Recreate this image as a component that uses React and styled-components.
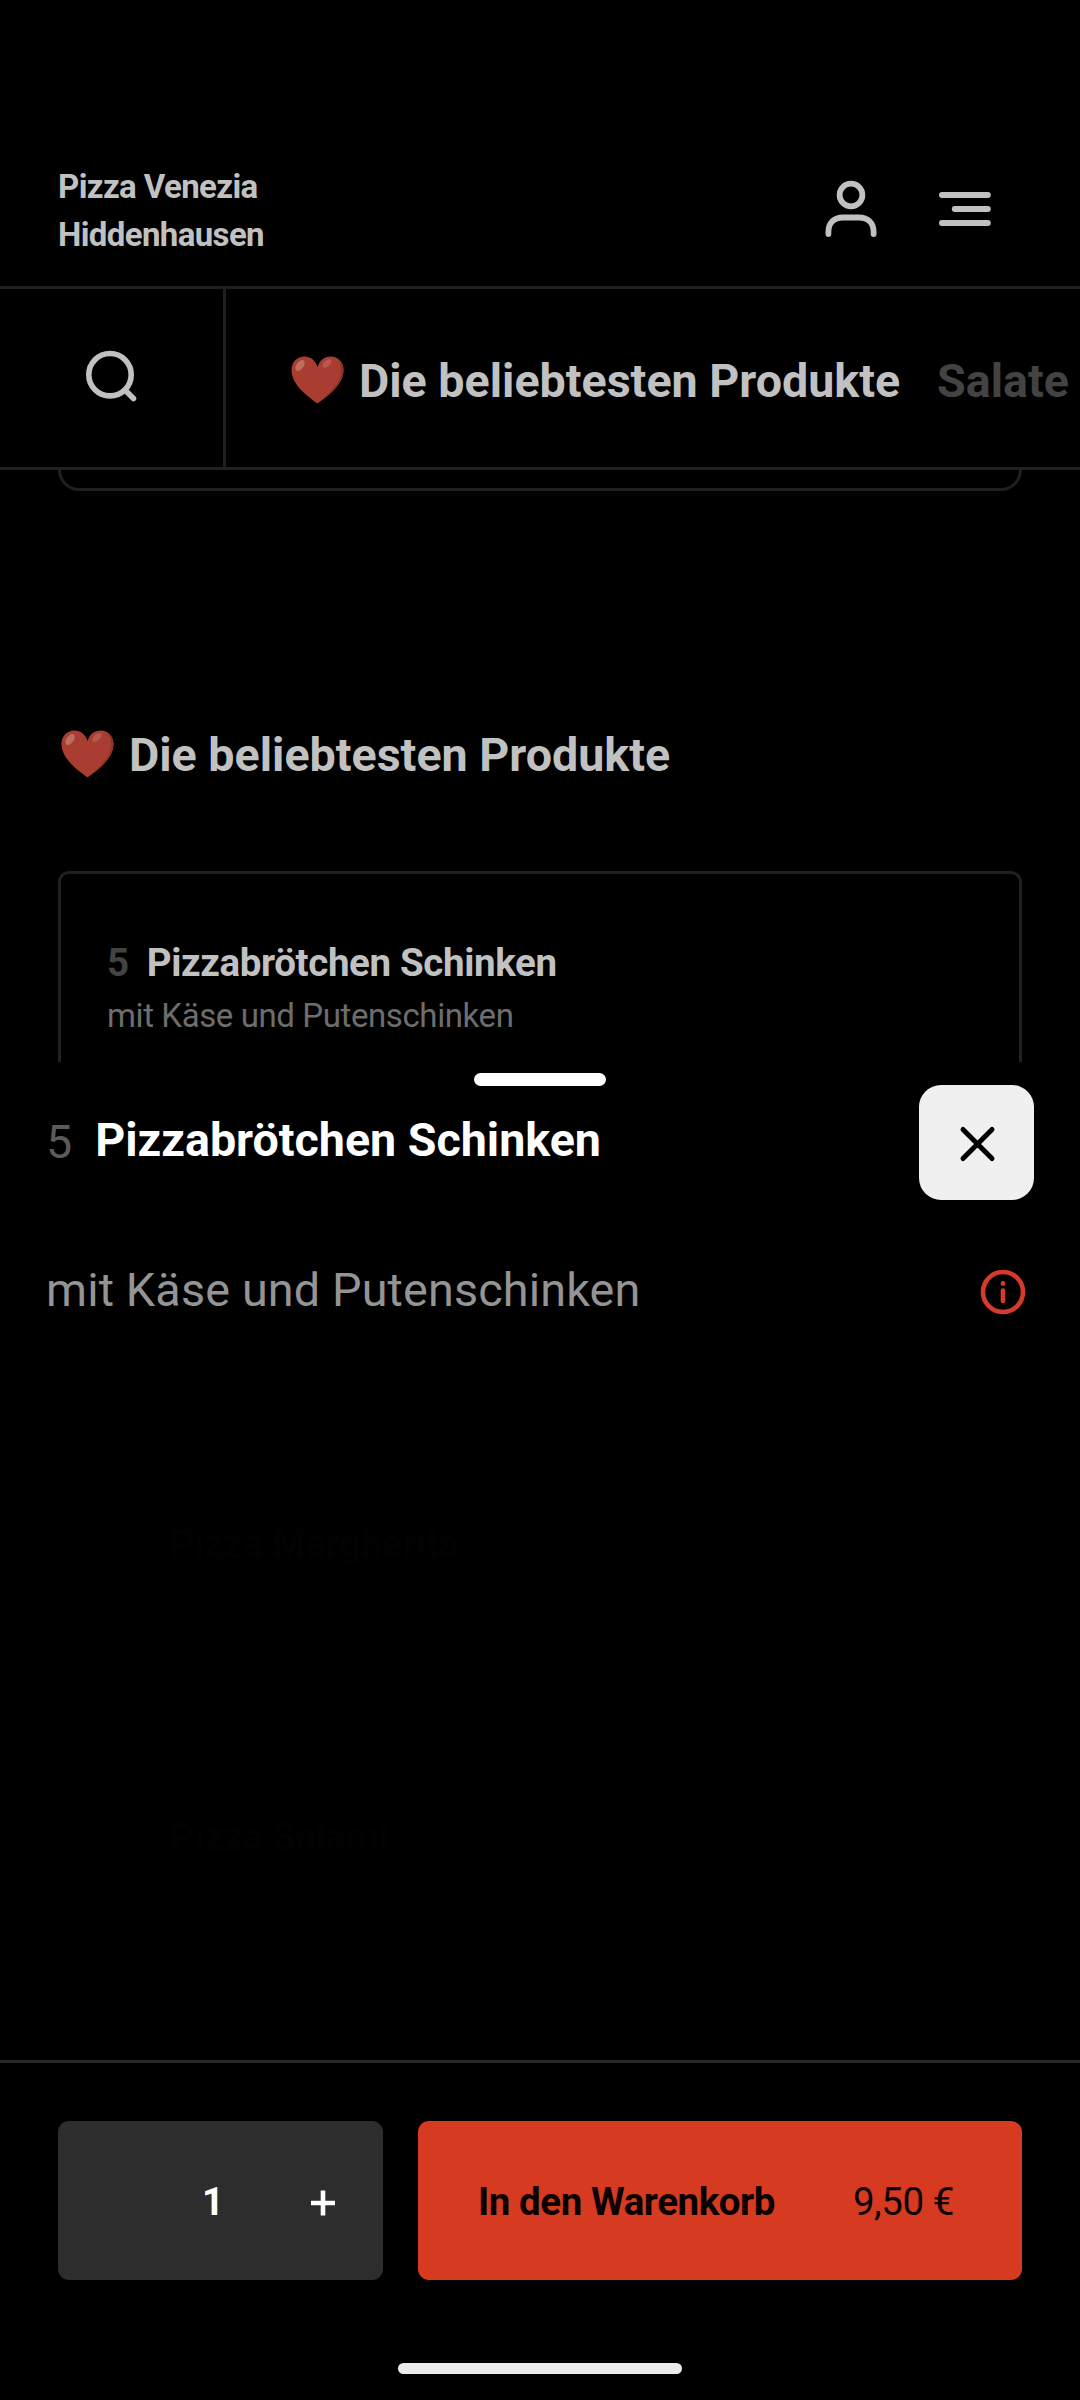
import React from "react";
import styled, { createGlobalStyle } from "styled-components";

const GlobalStyle = createGlobalStyle`
  *, *::before, *::after { box-sizing: border-box; }
  html, body { margin: 0; padding: 0; background: #000; }
  body { font-family: Roboto, "Liberation Sans", sans-serif; overflow: hidden; }
  button { font: inherit; border: 0; padding: 0; background: none; }
  h1, h2, h3, p { margin: 0; font-weight: 400; }
  svg { display: block; flex: none; }
`;

const Screen = styled.div`
  width: 1080px;
  height: 2400px;
  display: flex;
  flex-direction: column;
  background: #000;
  overflow: hidden;
`;

const Backdrop = styled.div`
  height: 1062px;
  flex: none;
  display: flex;
  flex-direction: column;
  overflow: hidden;
  color: #c1c1c1;
`;

const Header = styled.header`
  height: 289px;
  flex: none;
  display: flex;
  justify-content: space-between;
  padding: 163px 86px 0 58px;
  border-bottom: 3px solid #202020;
`;

const Brand = styled.h1`
  width: 260px;
  font-size: 33px;
  line-height: 48px;
  font-weight: 700;
  letter-spacing: -0.62px;
`;

const HeaderActions = styled.div`
  display: flex;
  height: 90px;
  gap: 54px;
`;

const IconButton = styled.button`
  width: 60px;
  height: 90px;
  color: inherit;
  display: flex;
  align-items: center;
  justify-content: center;
`;

const CategoryBar = styled.nav`
  height: 181px;
  flex: none;
  display: flex;
  border-bottom: 3px solid #202020;
`;

const SearchButton = styled.button`
  width: 226px;
  flex: none;
  display: flex;
  padding: 58px 0 0 82px;
  color: inherit;
  border-right: 3px solid #202020;
`;

const Tabs = styled.div`
  display: flex;
  flex: 1;
  padding: 57px 0 0 62px;
  overflow: hidden;
  white-space: nowrap;
`;

const Tab = styled.span`
  display: flex;
  align-items: center;
  height: 70px;
  margin-right: 37px;
  font-size: 46.6px;
  line-height: 70px;
  font-weight: 700;
  color: ${(p) => (p.$active ? "#c1c1c1" : "#434343")};
`;

const HeartSvg = styled.svg`
  margin: -2px 15px 0 3px;
`;

const Content = styled.main`
  flex: 1;
  display: flex;
  flex-direction: column;
  padding: 0 58px;
  overflow: hidden;
`;

const PreviousCard = styled.div`
  height: 21px;
  flex: none;
  border: 3px solid #202020;
  border-top: 0;
  border-radius: 0 0 22px 22px;
`;

const SectionTitle = styled.h2`
  display: flex;
  align-items: center;
  height: 70px;
  margin-top: 229px;
  font-size: 46.6px;
  line-height: 70px;
  font-weight: 700;
`;

const ProductCard = styled.article`
  flex: none;
  height: 260px;
  margin-top: 81px;
  padding: 65px 46px 0;
  border: 3px solid #202020;
  border-radius: 11px;
`;

const ProductName = styled.h3`
  display: flex;
  gap: 18px;
  font-size: 38.5px;
  line-height: 48px;
  font-weight: 700;
  letter-spacing: -0.36px;
`;

const ProductNumber = styled.span`
  color: #434343;
`;

const ProductText = styled.p`
  margin-top: 8px;
  font-size: 33px;
  line-height: 42px;
  letter-spacing: -0.4px;
  color: #6d6d6d;
`;

const Sheet = styled.section`
  flex: 1;
  display: flex;
  flex-direction: column;
  background: #000;
`;

const Grip = styled.div`
  width: 132px;
  height: 13px;
  flex: none;
  margin: 11px auto 0;
  border-radius: 7px;
  background: #fff;
`;

const SheetHead = styled.div`
  height: 114px;
  flex: none;
  display: flex;
  justify-content: space-between;
  margin-top: -1px;
  padding: 0 46px;
`;

const SheetTitle = styled.h2`
  display: flex;
  height: 70px;
  margin-top: 20px;
  gap: 23px;
  font-size: 46.6px;
  line-height: 70px;
  font-weight: 700;
  color: #fff;
`;

const SheetNumber = styled.span`
  padding-top: 2px;
  font-weight: 400;
  color: #5b5b5b;
`;

const CloseButton = styled.button`
  width: 115px;
  height: 115px;
  border-radius: 22px;
  background: #f0f0f0;
  display: flex;
  align-items: center;
  justify-content: center;
`;

const SheetInfo = styled.div`
  display: flex;
  flex: none;
  justify-content: space-between;
  align-items: center;
  height: 70px;
  margin-top: 56px;
  padding: 0 52px 0 46px;
`;

const SheetText = styled.p`
  font-size: 46.75px;
  line-height: 70px;
  letter-spacing: 0.15px;
  color: #949494;
`;

const InfoSvg = styled.svg`
  margin-top: 3px;
`;

const FadedList = styled.div`
  display: flex;
  flex-direction: column;
  gap: 245px;
  margin-top: 195px;
  padding-left: 170px;
  font-size: 38.5px;
  line-height: 48px;
  font-weight: 700;
  letter-spacing: -0.36px;
  color: #020202;
`;

const Footer = styled.footer`
  height: 340px;
  flex: none;
  display: flex;
  flex-direction: column;
  align-items: center;
  margin-top: auto;
  padding: 58px 58px 0;
  border-top: 3px solid #272727;
`;

const FooterActions = styled.div`
  width: 100%;
  display: flex;
  gap: 35px;
`;

const Quantity = styled.div`
  width: 325px;
  height: 159px;
  display: grid;
  grid-template-columns: 100px 108px 114px;
  align-items: center;
  justify-items: center;
  border-radius: 11px;
  background: #2d2d2d;
  color: #fff;
  font-size: 38.5px;
  font-weight: 700;
`;

const Amount = styled.span`
  grid-column: 2;
  line-height: 46px;
  padding: 3px 0 0 2px;
`;

const PlusButton = styled.button`
  width: 80px;
  height: 100px;
  padding-top: 4px;
  display: flex;
  align-items: center;
  justify-content: center;
  color: inherit;
`;

const CartButton = styled.button`
  flex: 1;
  height: 159px;
  display: flex;
  align-items: center;
  justify-content: space-between;
  padding: 3px 68px 0 60px;
  border-radius: 11px;
  background: #d63a21;
  color: #0a0100;
  font-size: 38.5px;
  line-height: 46px;
  letter-spacing: -0.43px;
`;

const CartLabel = styled.span`
  font-weight: 700;
`;

const HomeIndicator = styled.div`
  width: 284px;
  height: 11px;
  margin-top: 83px;
  border-radius: 6px;
  background: #ebebeb;
`;

function Heart() {
  return (
    <HeartSvg width="53" height="48" viewBox="0 0 53 48">
      <path d="M26.5 47.5C19.500 42 .5 30 .5 14C.5 6 6 .5 13.500 .5C19.500 .5 24.500 4.500 26.500 11C28.500 4.500 33.500 .5 39.500 .5C47 .5 52.500 6 52.500 14C52.500 30 33.500 42 26.500 47.500Z" fill="#a93d31" />
      <path d="M45 1.800C49.500 4 52.500 8.500 52.500 14C52.500 28 38 39 30 44.800C38 37 50 27 50 14C50 8.500 48 4.500 45 1.800Z" fill="#913229" />
      <ellipse cx="9" cy="9.500" rx="3.600" ry="6.300" transform="rotate(36 9 9.500)" fill="#ba6f61" />
      <ellipse cx="36" cy="7.500" rx="3" ry="5.500" transform="rotate(48 36 7.500)" fill="#b55a4c" />
    </HeartSvg>
  );
}

function UserIcon() {
  return (
    <svg width="60" height="66" viewBox="0 0 60 66" fill="none" stroke="currentColor" strokeWidth="5.8" strokeLinecap="round">
      <circle cx="31" cy="20" r="11.400" />
      <path d="M8.400 59V57C8.400 48 14 42.500 23 42.500H39C48 42.500 53.600 48 53.600 57V59" />
    </svg>
  );
}

function MenuIcon() {
  return (
    <svg width="60" height="66" viewBox="0 0 60 66" fill="none" stroke="currentColor" strokeWidth="6" strokeLinecap="round">
      <path d="M8 20H53.800M20.800 34H53.800M8 48H53.800" />
    </svg>
  );
}

function SearchIcon() {
  return (
    <svg width="60" height="60" viewBox="0 0 60 60" fill="none" stroke="currentColor" strokeWidth="5.6" strokeLinecap="round">
      <circle cx="28" cy="27.700" r="21.200" />
      <path d="M43 43L51.500 51.500" />
    </svg>
  );
}

export default function App() {
  return (
    <>
      <GlobalStyle />
      <Screen>
        <Backdrop>
          <Header>
            <Brand>Pizza Venezia Hiddenhausen</Brand>
            <HeaderActions>
              <IconButton aria-label="Konto"><UserIcon /></IconButton>
              <IconButton aria-label="Menü"><MenuIcon /></IconButton>
            </HeaderActions>
          </Header>
          <CategoryBar>
            <SearchButton aria-label="Suche"><SearchIcon /></SearchButton>
            <Tabs>
              <Tab $active><Heart />Die beliebtesten Produkte</Tab>
              <Tab>Salate</Tab>
            </Tabs>
          </CategoryBar>
          <Content>
            <PreviousCard />
            <SectionTitle><Heart />Die beliebtesten Produkte</SectionTitle>
            <ProductCard>
              <ProductName>
                <ProductNumber>5</ProductNumber>
                <span>Pizzabrötchen Schinken</span>
              </ProductName>
              <ProductText>mit Käse und Putenschinken</ProductText>
            </ProductCard>
          </Content>
        </Backdrop>
        <Sheet>
          <Grip />
          <SheetHead>
            <SheetTitle>
              <SheetNumber>5</SheetNumber>
              <span>Pizzabrötchen Schinken</span>
            </SheetTitle>
            <CloseButton aria-label="Schließen">
              <svg width="40" height="40" viewBox="0 0 40 40" fill="none" stroke="#000" strokeWidth="5" strokeLinecap="round">
                <path d="M6 6.500L35 35.500M35 6.500L6 35.500" />
              </svg>
            </CloseButton>
          </SheetHead>
          <SheetInfo>
            <SheetText>mit Käse und Putenschinken</SheetText>
            <InfoSvg width="50" height="50" viewBox="0 0 50 50" fill="none" stroke="#d63a2b" strokeWidth="4.6" strokeLinecap="round">
              <circle cx="25" cy="25" r="20" />
              <path d="M25 23.500V34" />
              <circle cx="25" cy="16.500" r="2.400" fill="#d63a2b" stroke="none" />
            </InfoSvg>
          </SheetInfo>
          <FadedList>
            <span>Pizza Margherita</span>
            <span>Pizza Salami</span>
          </FadedList>
          <Footer>
            <FooterActions>
              <Quantity>
                <Amount>1</Amount>
                <PlusButton aria-label="Mehr">
                  <svg width="26" height="26" viewBox="0 0 26 26" stroke="currentColor" strokeWidth="4.6">
                    <path d="M1 13H25M13 .5V25.500" />
                  </svg>
                </PlusButton>
              </Quantity>
              <CartButton>
                <CartLabel>In den Warenkorb</CartLabel>
                <span>9,50 €</span>
              </CartButton>
            </FooterActions>
            <HomeIndicator />
          </Footer>
        </Sheet>
      </Screen>
    </>
  );
}
